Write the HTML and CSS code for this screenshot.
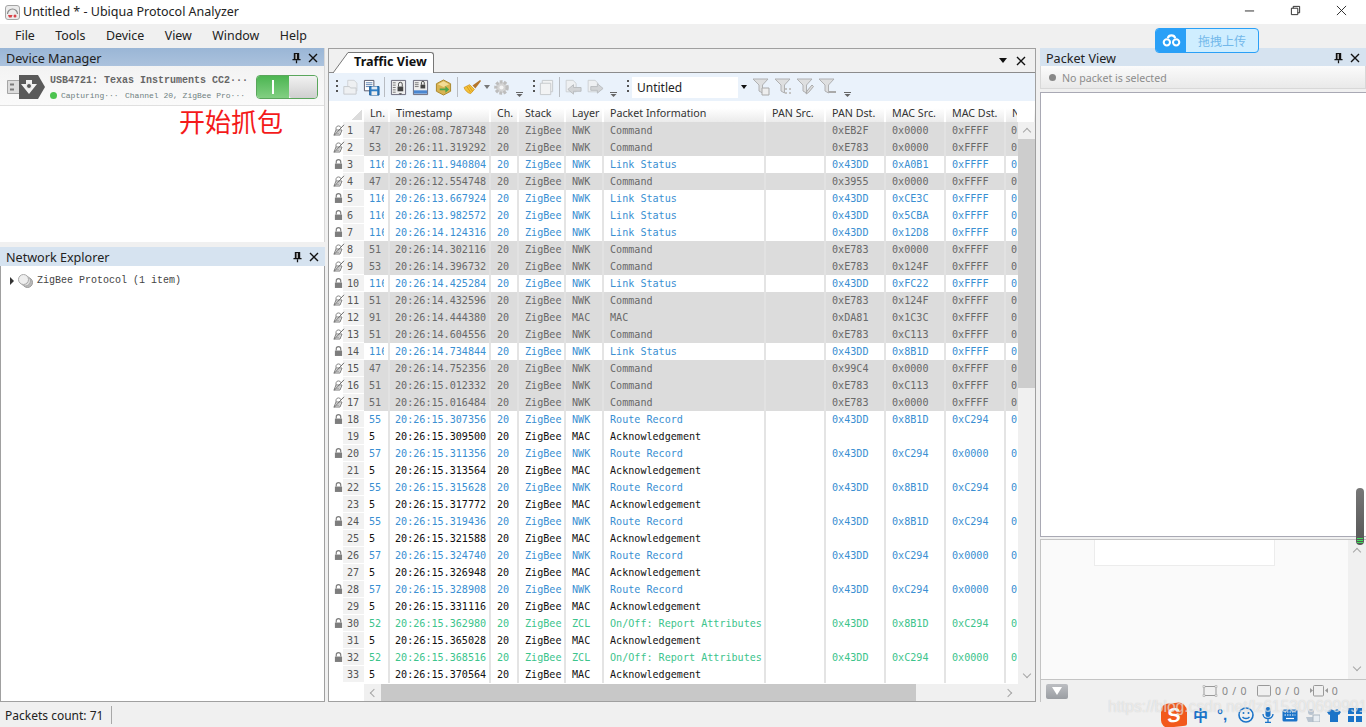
FILE: index.html
```html
<!DOCTYPE html>
<html lang="en">
<head>
<meta charset="utf-8">
<title>Untitled * - Ubiqua Protocol Analyzer</title>
<link rel="stylesheet" href="styles.css">
</head>
<body>
<svg class="defs" width="0" height="0" aria-hidden="true">
  <symbol id="lock" viewBox="0 0 10 12"><path d="M2.500 5.500V3.600a2.500 2.500 0 0 1 5 0v1.900" fill="none" stroke="#7d7d7d" stroke-width="1.300"/><rect x="1" y="5.500" width="8" height="6" fill="#7d7d7d"/></symbol>
  <symbol id="unlock" viewBox="0 0 12 12"><path d="M3 6V3.800a2.600 2.600 0 0 1 5 0" fill="none" stroke="#8a8a8a"/><path d="M1 11l2-5h6l-2 5z" fill="none" stroke="#7d7d7d"/><path d="M1 11.500L11 .8" stroke="#6d6d6d"/><path d="M2.500 8h5M2 9.700h4.500" stroke="#9a9a9a"/></symbol>
  <symbol id="pin" viewBox="0 0 10 12"><path d="M2 .5h6v6.500h1.500v1.500h-9V7H2z" fill="#111"/><path d="M4 1.500h1.200V7H4z" fill="#fff"/><path d="M4.300 8.500h1.400V12H4.300z" fill="#111"/></symbol>
  <symbol id="x" viewBox="0 0 10 10"><path d="M1 1l8 8M9 1L1 9" stroke="#111" stroke-width="1.400" fill="none"/></symbol>
  <symbol id="filter" viewBox="0 0 18 18"><path d="M1 1h15l-5.500 6v8l-3.500-2V7z" fill="#dedfe0" stroke="#b0b1b2"/></symbol>
  <symbol id="over" viewBox="0 0 7 5"><path d="M0 .5h7" stroke="#666"/><path d="M.5 2h6L3.500 5z" fill="#666"/></symbol>
  <symbol id="page" viewBox="0 0 16 18"><path d="M1.500 1.500h9l4 4v11h-13z" fill="#eef0f2" stroke="#c6c9cc"/></symbol>
</svg>

<div class="app">
  <header class="titlebar">
    <svg class="appicon" viewBox="0 0 15 15"><rect x=".5" y=".5" width="14" height="14" rx="2.500" fill="#ececec" stroke="#a5a5a5"/><path d="M2.500 9a5 5 0 0 1 10 0" fill="none" stroke="#8a8a8a" stroke-width="1.200"/><path d="M3 10h4.500l-1 2.500H4z" fill="#d9434a"/><circle cx="10" cy="11" r="1.500" fill="#d9434a"/></svg>
    <span class="titletext">Untitled * - Ubiqua Protocol Analyzer</span>
    <div class="winctl">
      <svg viewBox="0 0 12 12"><path d="M1 6.500h10" stroke="#222"/></svg>
      <svg viewBox="0 0 12 12"><path d="M1.500 3.500h7v7h-7zM3.500 3.500v-2h7v7h-2" fill="none" stroke="#222"/></svg>
      <svg viewBox="0 0 12 12"><path d="M1 1l10 10M11 1L1 11" stroke="#222" fill="none"/></svg>
    </div>
  </header>

  <nav class="menubar"><span>File</span><span>Tools</span><span>Device</span><span>View</span><span>Window</span><span>Help</span></nav>

  <main class="workspace">
    <section class="leftcol">
      <div class="panel device-panel">
        <div class="docktitle active"><span>Device Manager</span><div class="dockbtns"><svg viewBox="0 0 10 12"><use href="#pin"/></svg><svg viewBox="0 0 10 10"><use href="#x"/></svg></div></div>
        <div class="device">
          <svg class="usb" viewBox="0 0 38 24"><path d="M.5 5.500h12v13H.5z" fill="#dcdcdc" stroke="#a5a5a5"/><path d="M3 8.500h4v2H3zM3 13.500h4v2H3z" fill="#7a7a7a"/><path d="M12 0h19l7 12-7 12H12z" fill="#5a5a5a"/><path d="M14 9h5V5h6v4h5l-8 10z" fill="#f2f2f2"/><circle cx="22" cy="11" r="2.500" fill="#5a5a5a" stroke="#f2f2f2"/></svg>
          <div class="devinfo">
            <div class="devname">USB4721: Texas Instruments CC2···</div>
            <div class="devstat"><i class="led"></i><span class="cap">Capturing···</span><span>Channel 20, ZigBee Pro···</span></div>
          </div>
          <div class="toggle"><span class="on"><b></b></span><span class="knob"></span></div>
        </div>
      </div>
      <div class="panel net-panel">
        <div class="docktitle"><span>Network Explorer</span><div class="dockbtns"><svg viewBox="0 0 10 12"><use href="#pin"/></svg><svg viewBox="0 0 10 10"><use href="#x"/></svg></div></div>
        <div class="tree">
          <i class="tri"></i>
          <svg class="discs" viewBox="0 0 15 14"><circle cx="9.500" cy="8.500" r="5" fill="#bbb" stroke="#999"/><circle cx="7.500" cy="7" r="5" fill="#ddd" stroke="#aaa"/><circle cx="5.500" cy="5.500" r="5" fill="#eee" stroke="#aaa"/></svg>
          <span>ZigBee Protocol (1 item)</span>
        </div>
      </div>
    </section>

    <section class="center">
      <div class="tabbar">
        <div class="tab"><svg class="tabslant" viewBox="0 0 16 21"><path d="M0 21L15 .5H16V21z" fill="#fff"/><path d="M0 21L15 .5H16" fill="none" stroke="#777"/></svg><span>Traffic View</span></div>
        <div class="tabbtns"><i class="downtri"></i><svg viewBox="0 0 10 10"><use href="#x"/></svg></div>
      </div>

      <div class="toolbar">
        <i class="grip"></i>
        <span class="tbtn"><svg viewBox="0 0 18 18"><use href="#page" x="6" width="12" height="14"/><path d="M3 8h6l1 1.500h6V16H3z" fill="#eef0f2" stroke="#c6c9cc"/></svg></span>
        <span class="tbtn"><svg viewBox="0 0 18 18"><path d="M1.500 1.500h10v11h-10z" fill="#fff" stroke="#556"/><path d="M3 4h7M3 6h7M3 8h7" stroke="#5a7fb0"/><path d="M7 8h10v9H7z" fill="#2f7fc6" stroke="#1d5d9a"/><path d="M9 8h6v3H9z" fill="#dfe9f3"/><path d="M9 13h6v4H9z" fill="#eee"/></svg></span>
        <i class="sep"></i>
        <span class="tbtn"><svg viewBox="0 0 18 18"><path d="M1.500 1.500h15v15h-15z" fill="#eee" stroke="#667"/><path d="M3 4h3M3 6.500h3M3 9h3M3 11.500h3M3 14h3" stroke="#777"/><path d="M8 8h6v5H8z" fill="#444"/><path d="M9 8V5.500a2 2 0 0 1 4 0V8" fill="none" stroke="#444"/><path d="M9 15h4l-2 1.500z" fill="#444"/></svg></span>
        <span class="tbtn"><svg viewBox="0 0 18 18"><path d="M1.500 1.500h15v15h-15z" fill="#eee" stroke="#667"/><path d="M3 4h4M3 6h4M3 8h4" stroke="#777"/><path d="M9 6h5v4H9z" fill="#444"/><path d="M10 6V4a1.500 1.500 0 0 1 3 0v2" fill="none" stroke="#444"/><path d="M2 12h14v3.500H2z" fill="#4a86d0"/></svg></span>
        <span class="tbtn wide"><svg viewBox="0 0 18 18"><path d="M9 1l7.500 4v8L9 17l-7.500-4V5z" fill="#d9b352" stroke="#a88528"/><path d="M3 5.500L9 2.500l6 3-6 3z" fill="#f3dc95"/><path d="M5 10h6V7.500l4 3.500-4 3.500V12H5z" fill="#4da64a"/></svg></span>
        <i class="sep"></i>
        <span class="tbtn brush"><svg viewBox="0 0 20 18"><path d="M1 9l6-3 5 5-4 4.500C5 15 2 12 1 9z" fill="#f5c33b" stroke="#c98a10" stroke-width=".7"/><path d="M10 7l8-6 1 1-6 8z" fill="#b5762a"/><path d="M4 8l4 6M6 7l4 6" stroke="#c98a10" stroke-width=".7"/></svg><i class="mini"></i></span>
        <span class="tbtn"><svg viewBox="0 0 18 18"><circle cx="9" cy="9" r="6" fill="#d4d4d4" stroke="#bdbdbd" stroke-width="3.500" stroke-dasharray="2.800 1.500"/><circle cx="9" cy="9" r="2.200" fill="#f4f4f4"/></svg></span>
        <svg class="overflow" viewBox="0 0 7 5"><use href="#over"/></svg>
        <i class="grip g2"></i>
        <span class="tbtn"><svg viewBox="0 0 18 18"><path d="M4.500 1.500h11v12h-11z" fill="#f2f3f4" stroke="#c6c9cc"/><path d="M2.500 4.500h11v12h-11z" fill="#f2f3f4" stroke="#c6c9cc"/></svg></span>
        <i class="sep"></i>
        <span class="tbtn"><svg viewBox="0 0 18 18"><use href="#page" width="13" height="15"/><path d="M3 11l6-5v3h8v4H9v3z" fill="#d2d4d6" stroke="#b9bcbf"/></svg></span>
        <span class="tbtn"><svg viewBox="0 0 18 18"><use href="#page" width="13" height="15"/><path d="M17 10l-6-5v3H4v4h7v3z" fill="#d2d4d6" stroke="#b9bcbf"/></svg></span>
        <svg class="overflow" viewBox="0 0 7 5"><use href="#over"/></svg>
        <i class="grip g3"></i>
        <div class="combo"><span>Untitled</span><b><i></i></b></div>
        <span class="fbtn"><svg viewBox="0 0 18 18"><use href="#filter"/><path d="M10 10h7v7h-7z" fill="#eee" stroke="#aaa"/></svg></span>
        <span class="fbtn"><svg viewBox="0 0 18 18"><use href="#filter"/><path d="M11 10h2v2h-2zM15 10h2v2h-2zM11 14h2v2h-2zM15 14h2v2h-2z" fill="#c4c4c4"/></svg></span>
        <span class="fbtn"><svg viewBox="0 0 18 18"><use href="#filter"/><path d="M10 16l1-3 5-6 1.500 1.500-5 6z" fill="#ddd" stroke="#aaa"/></svg></span>
        <span class="fbtn"><svg viewBox="0 0 18 18"><use href="#filter"/><path d="M11 13h7v2h-7z" fill="#aaa"/></svg></span>
        <svg class="overflow o3" viewBox="0 0 7 5"><use href="#over"/></svg>
      </div>

      <div class="thead">
        <span class="corner"></span><span>Ln.</span><span>Timestamp</span><span>Ch.</span><span>Stack</span><span>Layer</span><span>Packet Information</span><span>PAN Src.</span><span>PAN Dst.</span><span>MAC Src.</span><span>MAC Dst.</span><span>N</span><span class="tend"></span>
      </div>

      <div class="gridbody">
        <div class="rows">
          <div class="row g"><span class="rh"><svg class="ul"><use href="#unlock"/></svg><em>1</em></span><span>47</span><span>20:26:08.787348</span><span>20</span><span>ZigBee</span><span>NWK</span><span>Command</span><span></span><span>0xEB2F</span><span>0x0000</span><span>0xFFFF</span><span>0</span></div>
          <div class="row g"><span class="rh"><svg class="ul"><use href="#unlock"/></svg><em>2</em></span><span>53</span><span>20:26:11.319292</span><span>20</span><span>ZigBee</span><span>NWK</span><span>Command</span><span></span><span>0xE783</span><span>0x0000</span><span>0xFFFF</span><span>0</span></div>
          <div class="row b"><span class="rh"><svg class="lk"><use href="#lock"/></svg><em>3</em></span><span>116</span><span>20:26:11.940804</span><span>20</span><span>ZigBee</span><span>NWK</span><span>Link Status</span><span></span><span>0x43DD</span><span>0xA0B1</span><span>0xFFFF</span><span>0</span></div>
          <div class="row g"><span class="rh"><svg class="ul"><use href="#unlock"/></svg><em>4</em></span><span>47</span><span>20:26:12.554748</span><span>20</span><span>ZigBee</span><span>NWK</span><span>Command</span><span></span><span>0x3955</span><span>0x0000</span><span>0xFFFF</span><span>0</span></div>
          <div class="row b"><span class="rh"><svg class="lk"><use href="#lock"/></svg><em>5</em></span><span>116</span><span>20:26:13.667924</span><span>20</span><span>ZigBee</span><span>NWK</span><span>Link Status</span><span></span><span>0x43DD</span><span>0xCE3C</span><span>0xFFFF</span><span>0</span></div>
          <div class="row b"><span class="rh"><svg class="lk"><use href="#lock"/></svg><em>6</em></span><span>116</span><span>20:26:13.982572</span><span>20</span><span>ZigBee</span><span>NWK</span><span>Link Status</span><span></span><span>0x43DD</span><span>0x5CBA</span><span>0xFFFF</span><span>0</span></div>
          <div class="row b"><span class="rh"><svg class="lk"><use href="#lock"/></svg><em>7</em></span><span>116</span><span>20:26:14.124316</span><span>20</span><span>ZigBee</span><span>NWK</span><span>Link Status</span><span></span><span>0x43DD</span><span>0x12D8</span><span>0xFFFF</span><span>0</span></div>
          <div class="row g"><span class="rh"><svg class="ul"><use href="#unlock"/></svg><em>8</em></span><span>51</span><span>20:26:14.302116</span><span>20</span><span>ZigBee</span><span>NWK</span><span>Command</span><span></span><span>0xE783</span><span>0x0000</span><span>0xFFFF</span><span>0</span></div>
          <div class="row g"><span class="rh"><svg class="ul"><use href="#unlock"/></svg><em>9</em></span><span>53</span><span>20:26:14.396732</span><span>20</span><span>ZigBee</span><span>NWK</span><span>Command</span><span></span><span>0xE783</span><span>0x124F</span><span>0xFFFF</span><span>0</span></div>
          <div class="row b"><span class="rh"><svg class="lk"><use href="#lock"/></svg><em>10</em></span><span>116</span><span>20:26:14.425284</span><span>20</span><span>ZigBee</span><span>NWK</span><span>Link Status</span><span></span><span>0x43DD</span><span>0xFC22</span><span>0xFFFF</span><span>0</span></div>
          <div class="row g"><span class="rh"><svg class="ul"><use href="#unlock"/></svg><em>11</em></span><span>51</span><span>20:26:14.432596</span><span>20</span><span>ZigBee</span><span>NWK</span><span>Command</span><span></span><span>0xE783</span><span>0x124F</span><span>0xFFFF</span><span>0</span></div>
          <div class="row g"><span class="rh"><svg class="ul"><use href="#unlock"/></svg><em>12</em></span><span>91</span><span>20:26:14.444380</span><span>20</span><span>ZigBee</span><span>MAC</span><span>MAC</span><span></span><span>0xDA81</span><span>0x1C3C</span><span>0xFFFF</span><span>0</span></div>
          <div class="row g"><span class="rh"><svg class="ul"><use href="#unlock"/></svg><em>13</em></span><span>51</span><span>20:26:14.604556</span><span>20</span><span>ZigBee</span><span>NWK</span><span>Command</span><span></span><span>0xE783</span><span>0xC113</span><span>0xFFFF</span><span>0</span></div>
          <div class="row b"><span class="rh"><svg class="lk"><use href="#lock"/></svg><em>14</em></span><span>116</span><span>20:26:14.734844</span><span>20</span><span>ZigBee</span><span>NWK</span><span>Link Status</span><span></span><span>0x43DD</span><span>0x8B1D</span><span>0xFFFF</span><span>0</span></div>
          <div class="row g"><span class="rh"><svg class="ul"><use href="#unlock"/></svg><em>15</em></span><span>47</span><span>20:26:14.752356</span><span>20</span><span>ZigBee</span><span>NWK</span><span>Command</span><span></span><span>0x99C4</span><span>0x0000</span><span>0xFFFF</span><span>0</span></div>
          <div class="row g"><span class="rh"><svg class="ul"><use href="#unlock"/></svg><em>16</em></span><span>51</span><span>20:26:15.012332</span><span>20</span><span>ZigBee</span><span>NWK</span><span>Command</span><span></span><span>0xE783</span><span>0xC113</span><span>0xFFFF</span><span>0</span></div>
          <div class="row g"><span class="rh"><svg class="ul"><use href="#unlock"/></svg><em>17</em></span><span>51</span><span>20:26:15.016484</span><span>20</span><span>ZigBee</span><span>NWK</span><span>Command</span><span></span><span>0xE783</span><span>0x0000</span><span>0xFFFF</span><span>0</span></div>
          <div class="row b"><span class="rh"><svg class="lk"><use href="#lock"/></svg><em>18</em></span><span>55</span><span>20:26:15.307356</span><span>20</span><span>ZigBee</span><span>NWK</span><span>Route Record</span><span></span><span>0x43DD</span><span>0x8B1D</span><span>0xC294</span><span>0</span></div>
          <div class="row k"><span class="rh"><em>19</em></span><span>5</span><span>20:26:15.309500</span><span>20</span><span>ZigBee</span><span>MAC</span><span>Acknowledgement</span><span></span><span></span><span></span><span></span><span></span></div>
          <div class="row b"><span class="rh"><svg class="lk"><use href="#lock"/></svg><em>20</em></span><span>57</span><span>20:26:15.311356</span><span>20</span><span>ZigBee</span><span>NWK</span><span>Route Record</span><span></span><span>0x43DD</span><span>0xC294</span><span>0x0000</span><span>0</span></div>
          <div class="row k"><span class="rh"><em>21</em></span><span>5</span><span>20:26:15.313564</span><span>20</span><span>ZigBee</span><span>MAC</span><span>Acknowledgement</span><span></span><span></span><span></span><span></span><span></span></div>
          <div class="row b"><span class="rh"><svg class="lk"><use href="#lock"/></svg><em>22</em></span><span>55</span><span>20:26:15.315628</span><span>20</span><span>ZigBee</span><span>NWK</span><span>Route Record</span><span></span><span>0x43DD</span><span>0x8B1D</span><span>0xC294</span><span>0</span></div>
          <div class="row k"><span class="rh"><em>23</em></span><span>5</span><span>20:26:15.317772</span><span>20</span><span>ZigBee</span><span>MAC</span><span>Acknowledgement</span><span></span><span></span><span></span><span></span><span></span></div>
          <div class="row b"><span class="rh"><svg class="lk"><use href="#lock"/></svg><em>24</em></span><span>55</span><span>20:26:15.319436</span><span>20</span><span>ZigBee</span><span>NWK</span><span>Route Record</span><span></span><span>0x43DD</span><span>0x8B1D</span><span>0xC294</span><span>0</span></div>
          <div class="row k"><span class="rh"><em>25</em></span><span>5</span><span>20:26:15.321588</span><span>20</span><span>ZigBee</span><span>MAC</span><span>Acknowledgement</span><span></span><span></span><span></span><span></span><span></span></div>
          <div class="row b"><span class="rh"><svg class="lk"><use href="#lock"/></svg><em>26</em></span><span>57</span><span>20:26:15.324740</span><span>20</span><span>ZigBee</span><span>NWK</span><span>Route Record</span><span></span><span>0x43DD</span><span>0xC294</span><span>0x0000</span><span>0</span></div>
          <div class="row k"><span class="rh"><em>27</em></span><span>5</span><span>20:26:15.326948</span><span>20</span><span>ZigBee</span><span>MAC</span><span>Acknowledgement</span><span></span><span></span><span></span><span></span><span></span></div>
          <div class="row b"><span class="rh"><svg class="lk"><use href="#lock"/></svg><em>28</em></span><span>57</span><span>20:26:15.328908</span><span>20</span><span>ZigBee</span><span>NWK</span><span>Route Record</span><span></span><span>0x43DD</span><span>0xC294</span><span>0x0000</span><span>0</span></div>
          <div class="row k"><span class="rh"><em>29</em></span><span>5</span><span>20:26:15.331116</span><span>20</span><span>ZigBee</span><span>MAC</span><span>Acknowledgement</span><span></span><span></span><span></span><span></span><span></span></div>
          <div class="row z"><span class="rh"><svg class="lk"><use href="#lock"/></svg><em>30</em></span><span>52</span><span>20:26:15.362980</span><span>20</span><span>ZigBee</span><span>ZCL</span><span>On/Off: Report Attributes</span><span></span><span>0x43DD</span><span>0x8B1D</span><span>0xC294</span><span>0</span></div>
          <div class="row k"><span class="rh"><em>31</em></span><span>5</span><span>20:26:15.365028</span><span>20</span><span>ZigBee</span><span>MAC</span><span>Acknowledgement</span><span></span><span></span><span></span><span></span><span></span></div>
          <div class="row z"><span class="rh"><svg class="lk"><use href="#lock"/></svg><em>32</em></span><span>52</span><span>20:26:15.368516</span><span>20</span><span>ZigBee</span><span>ZCL</span><span>On/Off: Report Attributes</span><span></span><span>0x43DD</span><span>0xC294</span><span>0x0000</span><span>0</span></div>
          <div class="row k"><span class="rh"><em>33</em></span><span>5</span><span>20:26:15.370564</span><span>20</span><span>ZigBee</span><span>MAC</span><span>Acknowledgement</span><span></span><span></span><span></span><span></span><span></span></div>
        </div>
        <div class="vscroll">
          <span class="arrow"><i class="chev up"></i></span>
          <span class="vthumb"></span>
          <span class="arrow push"><i class="chev down"></i></span>
        </div>
      </div>

      <div class="hscroll">
        <span class="hblank"></span>
        <span class="arrow"><i class="chev left"></i></span>
        <span class="hthumb"></span>
        <span class="arrow pushr"><i class="chev right"></i></span>
        <span class="hcorner"></span>
      </div>
    </section>

    <section class="rightcol">
      <div class="docktitle"><span>Packet View</span><div class="dockbtns"><svg viewBox="0 0 10 12"><use href="#pin"/></svg><svg viewBox="0 0 10 10"><use href="#x"/></svg></div></div>
      <div class="nosel"><i></i><span>No packet is selected</span></div>
      <div class="decode"></div>
      <div class="hexview">
        <div class="hexmain"><div class="hexbox"></div></div>
        <div class="hexscroll"><i class="chev up"></i><i class="chev down"></i></div>
      </div>
      <div class="counters">
        <span class="ddbtn"><i></i></span>
        <svg class="c1" viewBox="0 0 16 12"><rect x="2" y="1.500" width="12" height="9" fill="none" stroke="#999"/><path d="M1 .5h2v2H1zM13 .5h2v2h-2zM1 9.500h2v2H1zM13 9.500h2v2h-2z" fill="#eee" stroke="#aaa" stroke-width=".6"/></svg>
        <span class="cnt">0 / 0</span>
        <svg class="c2" viewBox="0 0 14 12"><rect x=".5" y=".5" width="13" height="10.500" rx="1" fill="none" stroke="#999"/></svg>
        <span class="cnt">0 / 0</span>
        <svg class="c3" viewBox="0 0 18 12"><rect x="3.500" y=".5" width="10" height="10.500" rx="1" fill="none" stroke="#999"/><path d="M0 3l3 2.500L0 8zM18 3l-3 2.500L18 8z" fill="#999"/></svg>
        <span class="cnt">0</span>
      </div>
    </section>
  </main>

  <footer class="statusbar"><span>Packets count: 71</span><i></i></footer>
</div>

<div class="annot">开始抓包</div>

<div class="upload">
  <span class="cloud"><svg viewBox="0 0 20 14"><circle cx="5" cy="9" r="3.400" fill="none" stroke="#fff" stroke-width="2.200"/><circle cx="15" cy="9" r="3.400" fill="none" stroke="#fff" stroke-width="2.200"/><path d="M6 4.500a4.200 4.200 0 0 1 8 0" fill="none" stroke="#fff" stroke-width="2.400"/></svg></span>
  <span class="uplabel">拖拽上传</span>
</div>

<div class="sysscroll"><i></i></div>

<div class="ime">
  <span class="sogou">S</span>
  <span class="zh">中</span>
  <span class="punc">°,</span>
  <svg class="im1" viewBox="0 0 16 16"><circle cx="8" cy="8" r="7" fill="none" stroke="#1a73c8" stroke-width="1.600"/><circle cx="5.500" cy="6" r="1" fill="#1a73c8"/><circle cx="10.500" cy="6" r="1" fill="#1a73c8"/><path d="M4.500 10c1.500 2 5.500 2 7 0" fill="none" stroke="#1a73c8" stroke-width="1.300"/></svg>
  <svg class="im2" viewBox="0 0 12 16"><rect x="3.500" y="0" width="5" height="10" rx="2.500" fill="#1a73c8"/><path d="M1 7c0 6 10 6 10 0M6 12v3M3 15.500h6" fill="none" stroke="#1a73c8" stroke-width="1.300"/></svg>
  <svg class="im3" viewBox="0 0 16 13"><rect x=".5" y=".5" width="15" height="12" rx="1.500" fill="#1a73c8"/><path d="M2.500 3h11M2.500 6h11" stroke="#fff" stroke-dasharray="1.500 1"/><path d="M4 9.500h8" stroke="#fff" stroke-width="1.200"/></svg>
  <svg class="im4" viewBox="0 0 14 14"><circle cx="5" cy="4" r="3" fill="#b9c4d0"/><path d="M0 9h9v5H2z" fill="#b9c4d0"/><rect x="7" y="7" width="7" height="7" fill="#e8edf2" stroke="#aab5c0"/></svg>
  <svg class="im5" viewBox="0 0 14 13"><path d="M4 0L0 3l2 3 1-.5V13h8V5.500l1 .5 2-3-4-3c-1 1.500-5 1.500-6 0z" fill="#1a73c8"/></svg>
  <svg class="im6" viewBox="0 0 14 14"><path d="M0 0h6v6H0zM8 0h6v6H8zM0 8h6v6H0zM8 8h6v6H8z" fill="#1a73c8"/></svg>
</div>

<div class="watermark">https://blog.csdn.net/lz615300699991</div>
</body>
</html>
```

FILE: styles.css
```css
* { box-sizing: border-box; }
html, body { margin: 0; padding: 0; height: 100%; overflow: hidden; }
body { position: relative; font-family: "Noto Sans", sans-serif; color: #222; background: #f0f0f0; }
.defs { position: absolute; }
svg { display: block; }
i, em { font-style: normal; }

.app { width: 1366px; height: 727px; display: flex; flex-direction: column; }

/* window chrome */
.titlebar { height: 24px; background: #fff; display: flex; align-items: center; padding-left: 5px; flex: none; }
.appicon { width: 15px; height: 15px; margin-right: 3px; }
.titletext { font-size: 12.5px; color: #222; margin-top: -1px; }
.winctl { margin-left: auto; display: flex; height: 24px; align-items: center; padding-right: 19px; gap: 35px; }
.winctl svg { width: 11px; height: 11px; margin-top: -4px; }
.menubar { height: 24px; flex: none; display: flex; align-items: center; padding: 0 0 2px 15px; gap: 20.5px; font-size: 12.4px; background: #f0f0f0; color: #222; }

.workspace { flex: 1; min-height: 0; display: flex; gap: 3px; }

/* left docks */
.leftcol { width: 325px; flex: none; display: flex; flex-direction: column; gap: 5px; }
.panel { display: flex; flex-direction: column; background: #fff; }
.device-panel { height: 194px; border-right: 1px solid #d8d8d8; }
.net-panel { flex: 1; border: 1px solid #a0a0a0; border-top: 0; }
.docktitle { height: 18px; flex: none; display: flex; align-items: center; justify-content: space-between; padding: 3px 6px 0; font-size: 12.6px; line-height: 15px; color: #222; background: #d6e3f0; }
.docktitle.active { background: linear-gradient(#9ab6d6, #abc2dd); }
.net-panel .docktitle { margin: 0 -1px; height: 19px; padding-top: 2px; }
.dockbtns { display: flex; align-items: center; gap: 7px; margin-top: -1px; }
.dockbtns svg:first-child { width: 9px; height: 12px; }
.dockbtns svg:last-child { width: 10px; height: 10px; }

.device { height: 40px; display: flex; align-items: center; padding: 2px 6px 0 7px; background: linear-gradient(#f3f3f3, #fafafa); border-bottom: 1px solid #e0e0e0; }
.usb { width: 38px; height: 24px; margin-right: 5px; flex: none; }
.devinfo { width: 206px; padding-top: 2px; flex: none; font-family: "Liberation Mono", monospace; }
.devname { font-size: 10px; font-weight: 700; line-height: 13px; color: #666; white-space: nowrap; }
.devstat { display: flex; align-items: center; font-size: 8px; line-height: 13px; margin-top: 2px; color: #6f7f7f; white-space: nowrap; }
.led { width: 7px; height: 7px; border-radius: 50%; background: #4cc34f; margin-right: 4px; }
.cap { width: 64px; }
.toggle { width: 62px; height: 24px; margin-left: auto; display: flex; border: 1px solid #5aa65c; border-radius: 4px; overflow: hidden; flex: none; }
.toggle .on { width: 32px; background: linear-gradient(#4cb552, #82cf82); display: flex; align-items: center; justify-content: center; }
.toggle .on b { width: 2px; height: 14px; background: #fff; }
.toggle .knob { flex: 1; background: linear-gradient(#f2f2f2, #cfcfcf); border-radius: 3px; }

.tree { display: flex; align-items: center; height: 29px; padding-left: 9px; font-family: "Liberation Mono", monospace; font-size: 10px; color: #444; }
.tri { width: 0; height: 0; border-left: 4px solid #333; border-top: 4px solid transparent; border-bottom: 4px solid transparent; margin-right: 4px; }
.discs { width: 15px; height: 14px; margin-right: 4px; }

/* traffic view */
.center { width: 708px; flex: none; display: flex; flex-direction: column; background: #fff; border: 1px solid #a0a0a0; }
.tabbar { height: 24px; flex: none; background: #f0f0f0; border-bottom: 1px solid #8c8c8c; display: flex; align-items: flex-end; justify-content: space-between; position: relative; }
.tab { margin-left: 20px; height: 21px; margin-bottom: -1px; background: #fff; border: 1px solid #777; border-left: 0; border-bottom: 0; border-radius: 0 3px 0 0; font-size: 12.6px; font-weight: 700; line-height: 18px; padding: 0 6px 0 5px; color: #111; position: relative; }
.tabslant { position: absolute; left: -16px; top: -1px; width: 16px; height: 21px; }
.tabbtns { display: flex; align-items: center; gap: 9px; height: 22px; padding-right: 9px; align-self: center; }
.tabbtns svg { width: 10px; height: 10px; }
.downtri { width: 0; height: 0; border: 4px solid transparent; border-top: 5px solid #111; border-bottom: 0; }

.toolbar { height: 28px; flex: none; background: #eaf2fb; display: flex; align-items: center; padding-left: 7px; position: relative; }
.grip { width: 2px; height: 15px; flex: none; background: repeating-linear-gradient(#555 0 2px, transparent 2px 5px); }
.g2 { margin-left: 10px; }
.g3 { margin-left: 10px; }
.tbtn { width: 22px; height: 24px; flex: none; display: flex; align-items: center; justify-content: center; }
.tbtn svg { width: 17px; height: 17px; }
.tbtn.wide { width: 24px; }
.tbtn.brush { width: 30px; gap: 2px; padding-left: 3px; justify-content: flex-start; }
.tbtn.brush svg { width: 19px; flex: none; }
.mini { width: 0; height: 0; border: 3.500px solid transparent; border-top: 4px solid #777; border-bottom: 0; }
.sep { width: 1px; height: 20px; background: #b8bcc2; margin: 0 2px; flex: none; }
.overflow { width: 7px; height: 5px; align-self: flex-end; margin: 0 0 4px 4px; flex: none; }
.o3 { margin-left: 6px; }
.combo { width: 118px; height: 21px; margin-left: 3px; background: #fff; display: flex; align-items: center; padding-left: 5px; font-size: 12px; color: #222; flex: none; }
.combo b { margin-left: auto; width: 12px; height: 21px; background: #eaf2fb; display: flex; align-items: center; justify-content: center; }
.combo b i { width: 0; height: 0; border: 3px solid transparent; border-top: 4px solid #111; border-bottom: 0; }
.fbtn { width: 22px; height: 22px; display: flex; align-items: center; justify-content: center; flex: none; }
.fbtn svg { width: 18px; height: 18px; }

.thead, .row { display: grid; }
.row { grid-template-columns: 35px 26px 101px 28px 47px 38px 162px 60px 60px 60px 60px 11px; }
.thead { grid-template-columns: 35px 26px 101px 28px 47px 38px 162px 60px 60px 60px 60px 11px 17px; height: 21px; flex: none; background: linear-gradient(#fff 35%, #ebebeb); font-size: 10.7px; line-height: 24px; color: #333; }
.thead span { padding-left: 6px; border-right: 2px solid #fff; overflow: hidden; white-space: nowrap; }
.thead span:nth-child(12) { border-right: 0; }
.thead .tend { background: #fff; border-right: 0; padding: 0; }
.thead .corner { padding: 0; background: linear-gradient(135deg, transparent 50%, #dcdcdc 50%) 23px 9px / 10px 10px no-repeat, #fff; border-right: 0; }

.gridbody { height: 562px; flex: none; display: flex; }
.rows { flex: 1; min-width: 0; overflow: hidden; font-family: "DejaVu Sans Mono", monospace; font-size: 10.1px; }
.row { height: 17px; line-height: 17px; white-space: nowrap; }
.row span { padding-left: 6px; overflow: hidden; border-right: 2px solid #e4e4e4; }
.row span:nth-child(2), .row span:nth-child(3) { padding-left: 5px; }
.row span:nth-child(2) { border-right: 6px solid transparent; background: linear-gradient(#e4e4e4, #e4e4e4) right / 2px 100% no-repeat; background-origin: border-box; }
.row span:last-child { border-right: 0; padding-left: 5px; }
.row .rh { display: flex; align-items: center; padding-left: 0; border-right: 0; background: linear-gradient(90deg, #fff 14px, #f2f2f2 14px); border-bottom: 1px solid #fff; color: #555; }
.rh em { padding-left: 18px; }
.rh svg { width: 12px; height: 12px; margin-left: 4px; flex: none; }
.rh .lk { width: 9px; margin-left: 5px; }
.rh .lk + em { padding-left: 4px; }
.rh .ul + em { padding-left: 2px; }
.row.g { background: #dcdcdc; color: #696969; }
.row.g span { border-right-color: #e2e2e2; }
.row.g span:nth-child(2) { border-right-color: transparent; background-image: linear-gradient(#e2e2e2, #e2e2e2); }
.row.b { background: #fff; color: #3a8fd2; }
.row.k { background: #fff; color: #111; }
.row.z { background: #fff; color: #3cc48c; }

.vscroll { width: 17px; flex: none; background: #f0f0f0; display: flex; flex-direction: column; }
.arrow { width: 17px; height: 17px; flex: none; display: flex; align-items: center; justify-content: center; background: #f0f0f0; }
.push { margin-top: auto; }
.pushr { margin-left: auto; }
.vthumb { height: 249px; background: #cdcdcd; flex: none; }
.chev { width: 6px; height: 6px; border: solid #a6a6a6; border-width: 1px 0 0 1px; display: block; }
.chev.up { transform: rotate(45deg); margin-top: 3px; }
.chev.down { transform: rotate(225deg); margin-bottom: 3px; }
.chev.left { transform: rotate(-45deg); margin-left: 3px; }
.chev.right { transform: rotate(135deg); margin-right: 3px; }

.hscroll { flex: 1; min-height: 0; display: flex; background: #f0f0f0; }
.hblank { width: 35px; background: #fff; flex: none; }
.hthumb { width: 535px; background: #c8c8c8; flex: none; }
.hcorner { width: 17px; flex: none; background: #f0f0f0; }

/* packet view */
.rightcol { flex: 1; min-width: 0; margin-left: 1px; display: flex; flex-direction: column; background: #f0f0f0; }
.nosel { height: 23px; flex: none; display: flex; align-items: center; padding: 1px 0 0 8px; font-size: 10.6px; color: #8c8c8c; background: linear-gradient(#fbfbfb, #e9e9e9); border: 1px solid #d8d8d8; border-top: 0; }
.nosel i { width: 7px; height: 7px; border-radius: 50%; background: #888; margin-right: 6px; }
.decode { height: 445px; flex: none; margin-top: 3px; background: #fff; border: 1px solid #a9a9b4; border-right: 0; }
.hexview { height: 141px; flex: none; margin-top: 2px; display: flex; background: #fafafa; border: 1px solid #c4c4c4; border-right: 0; }
.hexmain { flex: 1; padding-left: 53px; }
.hexbox { width: 181px; height: 26px; background: #fff; border: 1px solid #ececec; border-top: 0; }
.hexscroll { width: 18px; flex: none; background: #f0f0f0; display: flex; flex-direction: column; align-items: center; justify-content: space-between; padding: 6px 0; }
.counters { flex: 1; min-height: 0; display: flex; align-items: center; padding-left: 5px; font-size: 10.5px; color: #888; border-left: 1px solid #c4c4c4; }
.ddbtn { width: 22px; height: 15px; border-radius: 2px; background: linear-gradient(#bcbec2, #9a9da2); display: flex; align-items: center; justify-content: center; margin-right: 134px; }
.ddbtn i { width: 0; height: 0; border: 5px solid transparent; border-top: 8px solid #fff; border-bottom: 0; }
.c1 { width: 16px; height: 12px; }
.c2 { width: 14px; height: 12px; margin-left: 10px; }
.c3 { width: 18px; height: 12px; margin-left: 10px; }
.cnt { margin-left: 4px; word-spacing: 1px; letter-spacing: .3px; }

.statusbar { height: 25px; flex: none; display: flex; align-items: center; padding: 1px 0 0 5px; font-size: 12px; color: #222; background: #f0f0f0; }
.statusbar i { width: 1px; height: 18px; background: #a8a8a8; margin-left: 8px; }

/* overlays */
.annot { position: absolute; left: 179px; top: 103px; font-family: "Noto Sans CJK SC", sans-serif; font-size: 26px; line-height: 36px; color: #f41a1a; font-weight: 400; }
.upload { position: absolute; left: 1155px; top: 28px; width: 104px; height: 25px; display: flex; border: 1px solid #2aa0f7; border-radius: 4px; overflow: hidden; background: #cfeeff; }
.cloud { width: 30px; background: #2aa0f7; display: flex; align-items: center; justify-content: center; }
.cloud svg { width: 19px; height: 13px; }
.uplabel { flex: 1; text-align: center; font-family: "Noto Sans CJK SC", sans-serif; font-size: 12px; line-height: 23px; color: #72b8ea; }
.sysscroll { position: absolute; left: 1356px; top: 488px; width: 8px; height: 57px; border-radius: 4px; background: linear-gradient(#777, #555); }
.sysscroll i { position: absolute; left: 1px; bottom: 2px; width: 6px; height: 5px; background: repeating-linear-gradient(#3fdc5a 0 1px, transparent 1px 2px); }
.ime { position: absolute; left: 1161px; top: 703px; height: 24px; display: flex; align-items: center; }
.sogou { width: 26px; height: 24px; background: #f2591c; color: #fff; font: 700 20px/24px "Liberation Sans", sans-serif; text-align: center; border-radius: 6px 10px 2px 8px; transform: skewY(-6deg); }
.zh { margin-left: 6px; font-family: "Noto Sans CJK SC", sans-serif; font-weight: 700; font-size: 15px; line-height: 20px; color: #1a73c8; }
.punc { margin-left: 9px; margin-right: 5px; font: 700 15px/18px "Liberation Sans", sans-serif; color: #1a73c8; }
.im1 { width: 16px; height: 16px; margin-left: 6px; }
.im2 { width: 12px; height: 16px; margin-left: 8px; }
.im3 { width: 16px; height: 13px; margin-left: 8px; }
.im4 { width: 14px; height: 14px; margin-left: 8px; }
.im5 { width: 14px; height: 13px; margin-left: 7px; }
.im6 { width: 14px; height: 14px; margin-left: 7px; }
.watermark { position: absolute; left: 1108px; top: 695px; font-family: "Liberation Sans", sans-serif; font-size: 15.6px; line-height: 24px; color: rgba(255,255,255,.55); text-shadow: 0 0 1px rgba(150,150,150,.45); white-space: nowrap; }
```
